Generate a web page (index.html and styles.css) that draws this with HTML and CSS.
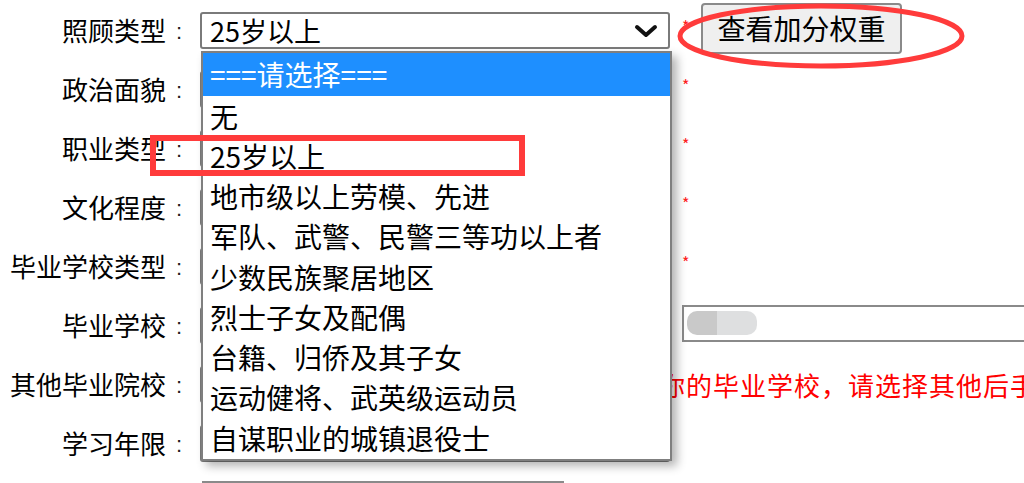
FILE: index.html
```html
<!DOCTYPE html>
<html lang="zh-CN">
<head>
    <meta charset="UTF-8">
    <title>报名信息</title>
    <link rel="stylesheet" href="styles.css">
</head>
<body>
    <div class="page">
        <form class="form">
            <div class="row">
                <label class="label">照顾类型<span class="colon">:</span></label>
                <div class="select">
                    <span class="select-text">25岁以上</span>
                    <svg class="chevron" width="24" height="14" viewBox="0 0 24 14"><path d="M3 3 L12 11 L21 3" fill="none" stroke="#111" stroke-width="4" stroke-linecap="round" stroke-linejoin="round"/></svg>
                </div>
                <span class="req">*</span>
                <button type="button" class="weight-btn">查看加分权重</button>
            </div>
            <div class="row">
                <label class="label">政治面貌<span class="colon">:</span></label>
                <div class="select"></div>
                <span class="req">*</span>
            </div>
            <div class="row">
                <label class="label">职业类型<span class="colon">:</span></label>
                <div class="select"></div>
                <span class="req">*</span>
            </div>
            <div class="row">
                <label class="label">文化程度<span class="colon">:</span></label>
                <div class="select"></div>
                <span class="req">*</span>
            </div>
            <div class="row">
                <label class="label">毕业学校类型<span class="colon">:</span></label>
                <div class="select"></div>
                <span class="req">*</span>
            </div>
            <div class="row">
                <label class="label">毕业学校<span class="colon">:</span></label>
                <div class="select"></div>
                <div class="text-input school-input">
                    <span class="blur-left"></span><span class="blur-right"></span>
                </div>
            </div>
            <div class="row">
                <label class="label">其他毕业院校<span class="colon">:</span></label>
                <div class="select"></div>
                <span class="tip">你的毕业学校，请选择其他后手动输入</span>
            </div>
            <div class="row">
                <label class="label">学习年限<span class="colon">:</span></label>
                <div class="select"></div>
            </div>
            <div class="row row-last">
                <label class="label"></label>
                <div class="text-input short-input"></div>
            </div>
        </form>

        <!-- opened dropdown of 照顾类型 -->
        <ul class="dropdown">
            <li class="option selected">===请选择===</li>
            <li class="option">无</li>
            <li class="option">25岁以上</li>
            <li class="option">地市级以上劳模、先进</li>
            <li class="option">军队、武警、民警三等功以上者</li>
            <li class="option">少数民族聚居地区</li>
            <li class="option">烈士子女及配偶</li>
            <li class="option">台籍、归侨及其子女</li>
            <li class="option">运动健将、武英级运动员</li>
            <li class="option">自谋职业的城镇退役士</li>
        </ul>

        <!-- annotations -->
        <div class="mark-rect"></div>
        <svg class="mark-ellipse" width="1024" height="483">
            <ellipse cx="821" cy="36" rx="141" ry="30" fill="none" stroke="#ff3b3b" stroke-width="5"/>
        </svg>
    </div>
</body>
</html>
```

FILE: styles.css
```css
body {
    margin: 0;
    background-color: #fff;
    font-family: "Noto Sans CJK SC", "Microsoft YaHei", sans-serif;
    color: #000;
    overflow: hidden;
}
.page {
    position: relative;
    width: 1024px;
    height: 483px;
    overflow: hidden;
}
.form {
    display: flex;
    flex-direction: column;
    padding-top: 1px;
}
.row {
    display: flex;
    align-items: center;
    height: 59px;
    white-space: nowrap;
}
.label {
    width: 192px;
    margin-right: 8px;
    text-align: right;
    font-size: 26px;
    line-height: 30px;
    flex-shrink: 0;
}
.colon {
    display: inline-block;
    width: 26px;
    text-align: center;
    vertical-align: 2px;
    font-family: "Liberation Sans", Arial, sans-serif;
    font-size: 22px;
    color: #222;
}
.select {
    display: flex;
    align-items: center;
    justify-content: space-between;
    width: 470px;
    height: 37px;
    padding: 0 8px 0 8px;
    box-sizing: border-box;
    border: 2px solid #7a7a7a;
    border-radius: 3px;
    background-color: #fff;
    flex-shrink: 0;
}
.select-text {
    font-size: 27px;
    line-height: 33px;
}
.chevron {
    margin-right: 2px;
}
.req {
    color: #ff2020;
    font-size: 16px;
    line-height: 16px;
    margin-left: 12px;
    margin-bottom: 10px;
}
.weight-btn {
    height: 51px;
    margin-left: 12px;
    margin-bottom: 5px;
    padding: 0 14px;
    background-color: #efefef;
    border: 2px solid #8a8a8a;
    border-radius: 4px;
    font-family: inherit;
    font-size: 28px;
    color: #000;
}
.text-input {
    height: 37px;
    box-sizing: border-box;
    border: 2px solid #8a8a8a;
    background-color: #fff;
    flex-shrink: 0;
}
.school-input {
    display: flex;
    align-items: center;
    width: 400px;
    margin-left: 12px;
    margin-bottom: 5px;
    padding-left: 3px;
}
.blur-left {
    width: 30px;
    height: 24px;
    background-color: #c9c9c9;
    border-radius: 10px 0 0 10px;
}
.blur-right {
    width: 40px;
    height: 24px;
    background-color: #dedfe0;
    border-radius: 0 10px 10px 0;
}
.tip {
    margin-left: -11px;
    font-size: 26px;
    letter-spacing: 1px;
    color: #ff0000;
}
.row-last {
    align-items: flex-start;
}
.short-input {
    width: 362px;
    margin-top: 8px;
    margin-left: 2px;
}
.dropdown {
    position: absolute;
    left: 201px;
    top: 51px;
    width: 471px;
    height: 410px;
    margin: 0;
    padding: 0;
    list-style: none;
    box-sizing: border-box;
    border: 2px solid #7f7f7f;
    background-color: #fff;
    box-shadow: 5px 5px 9px rgba(0, 0, 0, 0.3);
}
.option {
    height: 40.25px;
    line-height: 40.25px;
    padding-left: 7px;
    font-size: 28px;
    white-space: nowrap;
}
.option.selected {
    height: 42.5px;
    line-height: 42px;
    background-color: #1e8fff;
    color: #fff;
}
.mark-rect {
    position: absolute;
    left: 150px;
    top: 135px;
    width: 375px;
    height: 41px;
    box-sizing: border-box;
    border: 6px solid #ff3b3b;
}
.mark-ellipse {
    position: absolute;
    left: 0;
    top: 0;
}
```
